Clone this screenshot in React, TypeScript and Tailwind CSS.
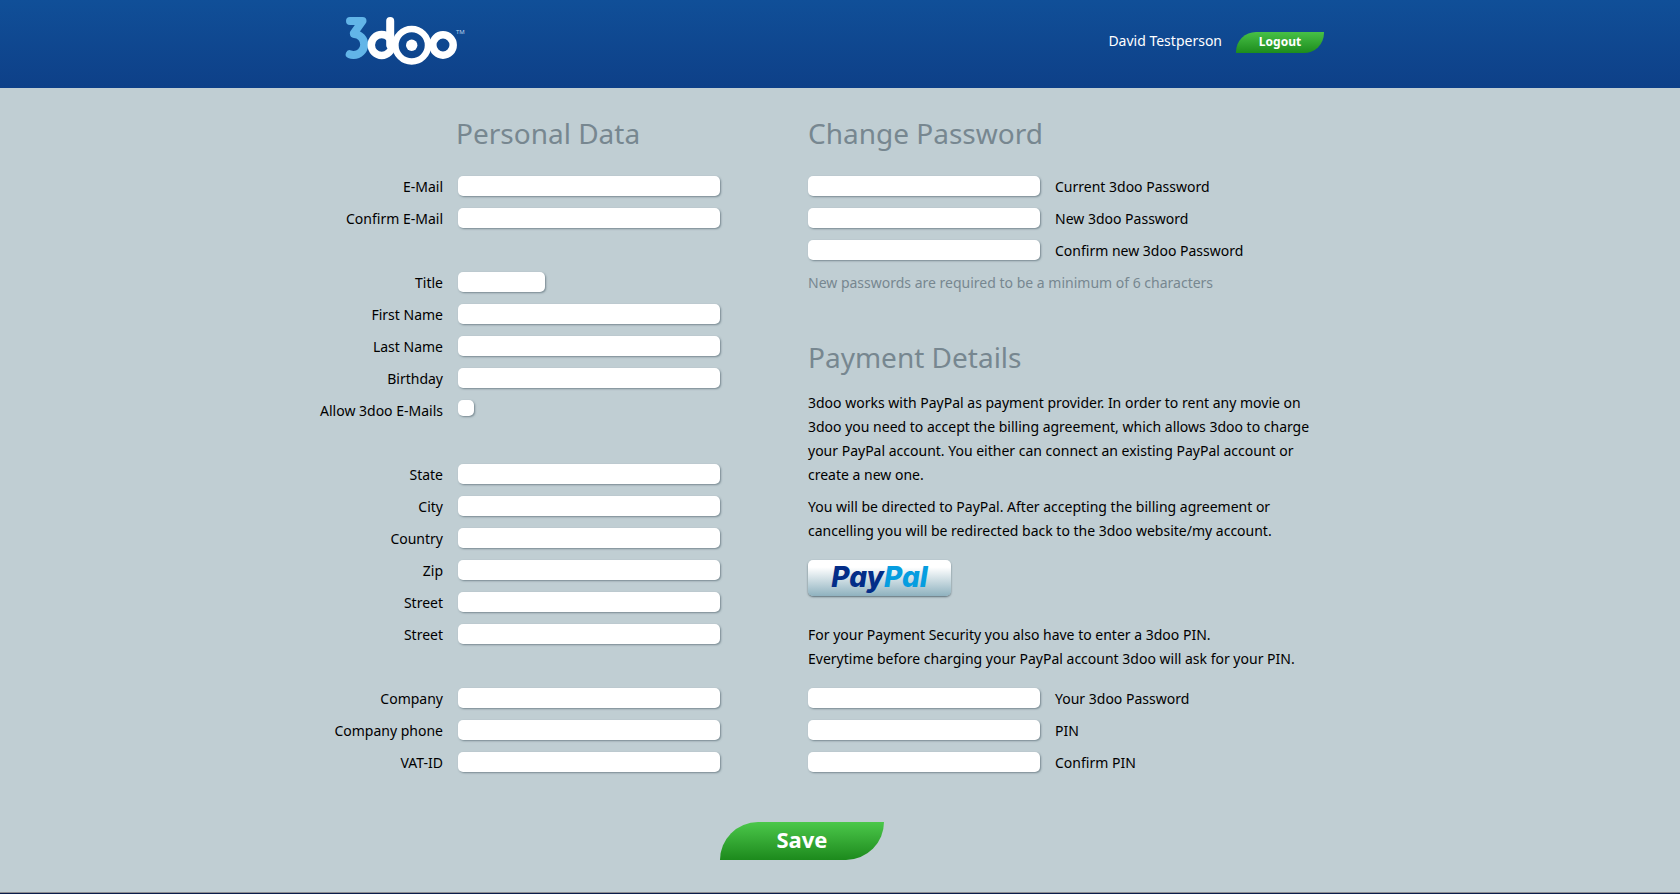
import { useId } from 'react';

type FieldProps = {
  label: string;
  type?: string;
  short?: boolean;
};

const inputStyle =
  'h-5 rounded-[5px] bg-white px-2 text-sm text-black shadow-[1px_1px_2px_rgba(70,90,100,0.6)] outline-none';

const headingStyle = 'text-[28px] leading-[38px] text-[#778790]';

const personalGroups: FieldProps[][] = [
  [
    { label: 'E-Mail', type: 'email' },
    { label: 'Confirm E-Mail', type: 'email' },
  ],
  [
    { label: 'Title', short: true },
    { label: 'First Name' },
    { label: 'Last Name' },
    { label: 'Birthday' },
    { label: 'Allow 3doo E-Mails', type: 'checkbox' },
  ],
  [
    { label: 'State' },
    { label: 'City' },
    { label: 'Country' },
    { label: 'Zip' },
    { label: 'Street' },
    { label: 'Street' },
  ],
  [{ label: 'Company' }, { label: 'Company phone', type: 'tel' }, { label: 'VAT-ID' }],
];

function Logo() {
  return (
    <svg width="120" height="52" viewBox="0 0 120 52" className="overflow-visible" role="img" aria-label="3doo">
      <g fill="none" stroke="#62b5e8" strokeWidth="8" strokeLinecap="round" strokeLinejoin="round">
        <polyline points="5,5 17.500,5 9,17" />
        <circle cx="8.700" cy="28.500" r="10.500" strokeDasharray="36.500 66" transform="rotate(-88 8.700 28.500)" />
      </g>
      <g fill="none" stroke="#fff">
        <circle cx="36.700" cy="29" r="10.400" strokeWidth="7.500" />
        <line x1="45.200" y1="5" x2="45.200" y2="29" strokeWidth="8" strokeLinecap="round" />
        <circle cx="66.700" cy="29.300" r="16.300" strokeWidth="6.500" />
        <circle cx="98" cy="29" r="10.200" strokeWidth="7.500" />
      </g>
      <circle cx="66.700" cy="29.300" r="5.700" fill="#fff" />
      <text x="111" y="18" fill="#b9d3ee" fontSize="6" fontFamily="Noto Sans, sans-serif">
        TM
      </text>
    </svg>
  );
}

function Header() {
  return (
    <header className="h-[88px] bg-linear-to-b from-[#104f98] to-[#0e4088]">
      <div className="mx-auto flex max-w-[1044px] items-start justify-between pr-[38px] pl-[27px]">
        <a href="#" className="mt-4">
          <Logo />
        </a>
        <div className="mt-8 flex items-start gap-[14px]">
          <span className="text-sm leading-[18px] text-white">David Testperson</span>
          <button
            type="button"
            className="h-[21px] w-[88px] rounded-tl-[20px] rounded-br-[20px] bg-linear-to-b from-[#47c146] to-[#1c8c1c] pb-[2px] text-xs font-bold text-white"
          >
            Logout
          </button>
        </div>
      </div>
    </header>
  );
}

function PersonalField({ label, type = 'text', short }: FieldProps) {
  const id = useId();

  return (
    <div className="flex h-5 items-start gap-[15px]">
      <label htmlFor={id} className="w-[125px] shrink-0 text-right leading-[22px] whitespace-nowrap">
        {label}
      </label>
      {type === 'checkbox' ? (
        <input
          id={id}
          type="checkbox"
          className="size-4 appearance-none rounded-[5px] bg-white shadow-[1px_1px_2px_rgba(70,90,100,0.6)] checked:bg-[#2fa52f]"
        />
      ) : (
        <input id={id} type={type} className={`${inputStyle} ${short ? 'w-[87px]' : 'w-[262px]'}`} />
      )}
    </div>
  );
}

function SecretField({ label }: FieldProps) {
  const id = useId();

  return (
    <div className="flex h-5 items-start gap-[15px]">
      <input id={id} type="password" className={`${inputStyle} w-[232px]`} />
      <label htmlFor={id} className="leading-[22px]">
        {label}
      </label>
    </div>
  );
}

function PersonalData() {
  return (
    <section className="w-[402px] shrink-0">
      <h2 className={`${headingStyle} mb-6 pl-[138px]`}>Personal Data</h2>
      <div className="flex flex-col gap-11">
        {personalGroups.map((group, i) => (
          <div key={i} className="flex flex-col gap-3">
            {group.map((field, j) => (
              <PersonalField key={j} {...field} />
            ))}
          </div>
        ))}
      </div>
    </section>
  );
}

function Account() {
  return (
    <section className="flex-1">
      <h2 className={`${headingStyle} mb-6`}>Change Password</h2>
      <div className="flex flex-col gap-3">
        <SecretField label="Current 3doo Password" />
        <SecretField label="New 3doo Password" />
        <SecretField label="Confirm new 3doo Password" />
        <p className="leading-[22px] text-[#778790]">New passwords are required to be a minimum of 6 characters</p>
      </div>

      <h2 className={`${headingStyle} mt-11 mb-[15px]`}>Payment Details</h2>
      <p className="leading-6">
        3doo works with PayPal as payment provider. In order to rent any movie on
        <br />
        3doo you need to accept the billing agreement, which allows 3doo to charge
        <br />
        your PayPal account. You either can connect an existing PayPal account or
        <br />
        create a new one.
      </p>
      <p className="mt-2 leading-6">
        You will be directed to PayPal. After accepting the billing agreement or
        <br />
        cancelling you will be redirected back to the 3doo website/my account.
      </p>
      <button
        type="button"
        className="mt-[17px] block h-9 w-[143px] rounded-[5px] bg-linear-to-b from-white from-20% to-[#8fb2bf] pb-[2px] font-[Inter,sans-serif] text-[28px] leading-8 font-extrabold text-[#032d88] italic shadow-[0_1px_2px_rgba(50,70,80,0.7)]"
      >
        Pay<span className="text-[#069de0]">Pal</span>
      </button>
      <p className="mt-[27px] mb-[17px] leading-6">
        For your Payment Security you also have to enter a 3doo PIN.
        <br />
        Everytime before charging your PayPal account 3doo will ask for your PIN.
      </p>
      <div className="flex flex-col gap-3">
        <SecretField label="Your 3doo Password" />
        <SecretField label="PIN" />
        <SecretField label="Confirm PIN" />
      </div>
    </section>
  );
}

export default function App() {
  return (
    <div className="flex min-h-screen flex-col border-b border-[#0b1d4a] bg-[#c0ced3] font-['Noto_Sans',sans-serif] text-sm text-black">
      <Header />
      <main className="grow border-b border-[#8b8b90]">
        <form className="mx-auto max-w-[1044px] pt-[26px] pb-8" onSubmit={(e) => e.preventDefault()}>
          <div className="flex gap-[88px]">
            <PersonalData />
            <Account />
          </div>
          <button
            type="submit"
            className="mt-[50px] ml-[402px] block h-[38px] w-[164px] rounded-tl-[38px] rounded-br-[38px] bg-linear-to-b from-[#4bc84a] to-[#1c8a1c] pb-1 text-[22px] leading-8 font-bold text-white"
          >
            Save
          </button>
        </form>
      </main>
    </div>
  );
}
